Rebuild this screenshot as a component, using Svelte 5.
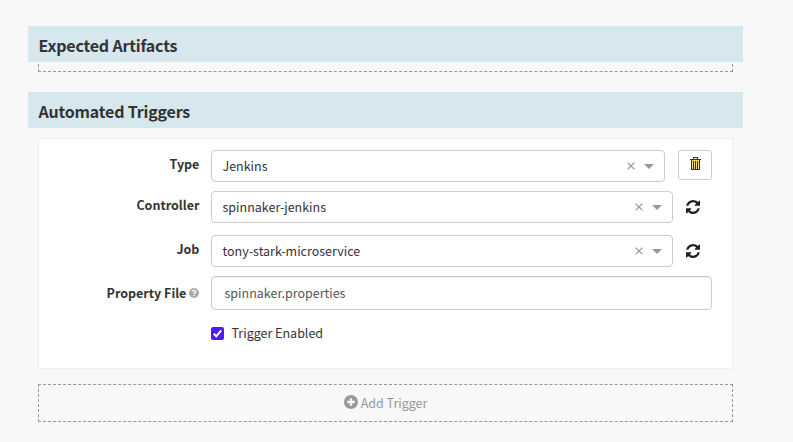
<script>
  const selects = [
    { label: 'Type', value: 'Jenkins', action: 'delete' },
    { label: 'Controller', value: 'spinnaker-jenkins', action: 'refresh' },
    { label: 'Job', value: 'tony-stark-microservice', action: 'refresh' }
  ];
  let propertyFile = $state('spinnaker.properties');
  let enabled = $state(true);
</script>

<main>
  <section class="artifacts">
    <h4>Expected Artifacts</h4>
    <div class="collapsed"></div>
  </section>

  <section>
    <h4>Automated Triggers</h4>
    <div class="card">
      {#each selects as row}
        <div class="row {row.label.toLowerCase()}">
          <span class="label">{row.label}</span>
          <div class="select">
            <span class="value">{row.value}</span>
            <svg class="clear" width="8" height="8" viewBox="0 0 8 8"><path d="M.6.6 7.4 7.4M7.4.6.6 7.4" /></svg>
            <span class="caret"></span>
          </div>
          {#if row.action === 'delete'}
            <button class="delete" aria-label="Remove trigger">
              <svg width="11" height="14" viewBox="0 0 11 14" shape-rendering="crispEdges">
                <path class="slats" d="M1 3h9v10H1z" />
                <path class="bin" d="M3.5 2.5V.5h4v2M0 2.5h11M1.5 3v9.5h8V3M3.5 4v8M5.500 4v8M7.500 4v8" />
              </svg>
            </button>
          {:else}
            <button class="refresh" aria-label="Refresh">
              <svg width="14" height="14" viewBox="0 0 1536 1536">
                <path d="M1511 928q0 5-1 7-64 268-268 434.500T764 1536q-146 0-282.500-55T238 1324l-129 129q-19 19-45 19t-45-19-19-45V960q0-26 19-45t45-19h448q26 0 45 19t19 45-19 45l-137 137q71 66 161 102t187 36q134 0 250-65t186-179q11-17 53-117 8-23 30-23h192q13 0 22.500 9.500t9.500 22.500zm25-800v448q0 26-19 45t-45 19h-448q-26 0-45-19t-19-45 19-45l138-138Q969 256 768 256q-134 0-250 65T332 500q-11 17-53 117-8 23-30 23H50q-13 0-22.500-9.500T18 608v-7q65-268 270-434.500T768 0q146 0 284 55.500T1297 212l130-129q19-19 45-19t45 19 19 45z" />
              </svg>
            </button>
          {/if}
        </div>
      {/each}
      <div class="row property">
        <span class="label">
          Property File
          <svg width="10" height="10" viewBox="0 0 10 10">
            <circle cx="5" cy="5" r="5" fill="#aaa" />
            <path d="M3.4 3.8C3.5 1.9 6.7 2 6.6 3.9 6.5 4.9 5.1 4.9 5.1 6M5.1 6.8V8" fill="none" stroke="#fff" stroke-width="1.3" />
          </svg>
        </span>
        <input class="text" type="text" aria-label="Property File" bind:value={propertyFile} />
      </div>
      <label class="enabled">
        <input type="checkbox" bind:checked={enabled} />
        <span class="box">
          {#if enabled}
            <svg width="13" height="13" viewBox="0 0 13 13"><path d="M2.7 6.8 5.3 9.3 10.2 3.4" /></svg>
          {/if}
        </span>
        <span>Trigger Enabled</span>
      </label>
    </div>
    <button class="add">
      <svg width="14" height="14" viewBox="0 0 13 13">
        <circle cx="6.5" cy="6.5" r="6.5" fill="#999" />
        <path d="M6.5 3v7M3 6.5h7" stroke="#f8f8f8" stroke-width="2.2" />
      </svg>
      <span>Add Trigger</span>
    </button>
  </section>
</main>

<style>
  :global(body) { background: #f8f8f8; }
  * { box-sizing: border-box; }
  main {
    height: 442px;
    overflow: hidden;
    padding: 26px 50px 0 28px;
    font: 12.5px/18px "Noto Sans CJK SC", "Open Sans", sans-serif;
    color: #333;
  }
  svg { display: block; flex: none; }
  button { padding: 0; font: inherit; background: none; border: 0; }
  h4 {
    height: 36px;
    margin: 0;
    padding: 1px 10px 0 10.5px;
    background: #d6e7ed;
    font-size: 16px;
    line-height: 36px;
    font-weight: 600;
    letter-spacing: -0.19px;
    white-space: nowrap;
  }
  .artifacts { height: 66px; }
  .collapsed {
    height: 8px;
    margin: 2px 10px 0;
    border: 1px dashed #999;
    border-top: 0;
  }
  .card {
    height: 231px;
    margin: 10px 10px 0;
    padding: 11px 20px 0 0;
    background: #fff;
    border: 1px solid #eee;
  }
  .row { display: flex; height: 32px; }
  .controller { margin-top: 9px; }
  .job { margin-top: 12px; }
  .property { margin-top: 9px; height: 34px; }
  .label {
    display: flex;
    justify-content: flex-end;
    align-items: center;
    gap: 3px;
    width: 160.4px;
    height: 28px;
    margin-right: 11.6px;
    font-weight: 700;
    white-space: nowrap;
  }
  .property .label { height: 34px; }
  .select {
    display: flex;
    align-items: center;
    flex: 1;
    padding: 0 10px 0 10.5px;
    border: 1px solid #ccc;
    border-radius: 4px;
  }
  .value { flex: 1; }
  .clear { margin-right: 9px; fill: none; stroke: #999; stroke-width: 1.3; }
  .caret { border: 5px solid transparent; border-top-color: #999; border-bottom: 0; }
  .delete {
    display: flex;
    justify-content: center;
    width: 34px;
    height: 30px;
    margin-left: 13px;
    padding: 6px 0 0 1px;
    border: 1px solid #ccc;
    border-radius: 3px;
  }
  .slats { fill: #f3d878; }
  .bin { fill: none; stroke: #333; stroke-width: 1; }
  .refresh { display: flex; align-items: center; width: 39px; padding-left: 13px; }
  .refresh path { fill: #222; }
  .text {
    flex: 1;
    min-width: 0;
    padding: 0 12.5px;
    border: 1px solid #ccc;
    border-radius: 4px;
    font: inherit;
    color: #555;
    background: #fff;
    box-shadow: inset 0 1px 1px rgba(0, 0, 0, 0.075);
  }
  .enabled {
    display: flex;
    align-items: center;
    gap: 7.5px;
    height: 18px;
    margin: 14px 0 0 172px;
  }
  .enabled input { position: absolute; opacity: 0; }
  .box { width: 13px; height: 13px; border-radius: 2px; background: #4a1cff; }
  .box path { fill: none; stroke: #fff; stroke-width: 2; }
  .add {
    display: flex;
    align-items: center;
    justify-content: center;
    gap: 3px;
    width: 695px;
    height: 38px;
    margin: 15px 10px 0;
    border: 1px dashed #999;
    color: #999;
  }
  .add svg { margin-top: -2px; }
</style>
